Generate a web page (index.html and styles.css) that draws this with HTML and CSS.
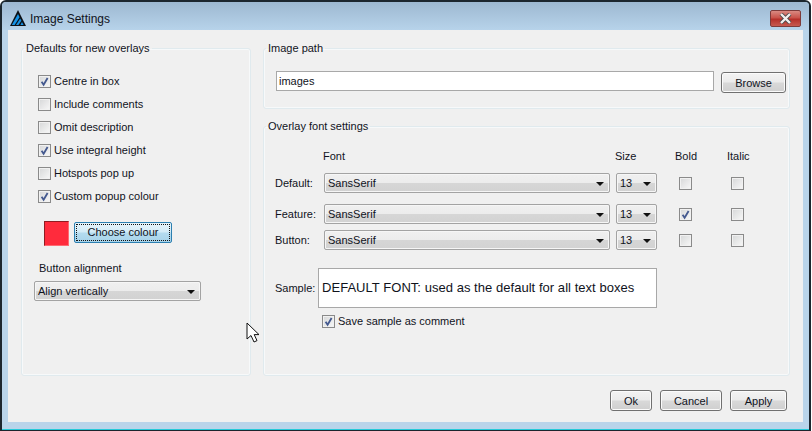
FILE: index.html
```html
<!DOCTYPE html>
<html lang="en">

<head>
    <meta charset="UTF-8">
    <meta name="viewport" content="width=device-width, initial-scale=1.0">
    <title>Image Settings</title>
    <link rel="stylesheet" href="styles.css">
</head>

<body>
    <svg class="defs" width="0" height="0">
        <symbol id="tick" viewBox="0 0 13 13">
            <path d="M3.6 6.8 L5.6 9.8 L9.6 3" fill="none" stroke="#44598f" stroke-width="1.8"/>
        </symbol>
    </svg>

    <div class="window">
        <div class="titlebar">
            <svg class="app-icon" width="18" height="18" viewBox="0 0 18 18">
                <path d="M9 1 L17 17 H1 Z" fill="#0b0f14"/>
                <path d="M9 5 L10.6 8.2 L5.6 16 H2.8 Z" fill="#1592e6"/>
                <path d="M11.2 9.4 L12.4 11.8 L9.4 16 H7 Z" fill="#1592e6"/>
                <path d="M13 13 L14.6 16 H11.4 Z" fill="#1592e6"/>
            </svg>
            <span class="title">Image Settings</span>
            <div class="close">
                <svg width="15" height="11" viewBox="0 0 15 11">
                    <path d="M3 1 L12 10 M12 1 L3 10" stroke="#4a4a4a" stroke-width="4"/>
                    <path d="M3 1 L12 10 M12 1 L3 10" stroke="#f3eeee" stroke-width="2.4"/>
                </svg>
            </div>
        </div>

        <div class="panel">
            <div class="groups">
                <fieldset class="group defaults">
                    <legend>Defaults for new overlays</legend>
                    <label class="check-row"><span class="check"><svg><use href="#tick"/></svg></span>Centre in box</label>
                    <label class="check-row"><span class="check"></span>Include comments</label>
                    <label class="check-row"><span class="check"></span>Omit description</label>
                    <label class="check-row"><span class="check"><svg><use href="#tick"/></svg></span>Use integral height</label>
                    <label class="check-row"><span class="check"></span>Hotspots pop up</label>
                    <label class="check-row"><span class="check"><svg><use href="#tick"/></svg></span>Custom popup colour</label>
                    <div class="colour-row">
                        <div class="swatch"></div>
                        <button class="btn focused" type="button"><span>Choose colour</span></button>
                    </div>
                    <div class="align-label">Button alignment</div>
                    <div class="combo align-combo">Align vertically<i class="arrow"></i></div>
                </fieldset>

                <div class="right-col">
                    <fieldset class="group path">
                        <legend>Image path</legend>
                        <div class="path-row">
                            <div class="textbox">images</div>
                            <button class="btn browse" type="button">Browse</button>
                        </div>
                    </fieldset>

                    <fieldset class="group fonts">
                        <legend>Overlay font settings</legend>
                        <div class="font-head">
                            <span class="h-font">Font</span>
                            <span class="h-size">Size</span>
                            <span class="h-bold">Bold</span>
                            <span class="h-italic">Italic</span>
                        </div>
                        <div class="font-row row-default">
                            <span>Default:</span>
                            <div class="combo">SansSerif<i class="arrow"></i></div>
                            <div class="combo size-combo">13<i class="arrow"></i></div>
                            <span class="check"></span>
                            <span class="check"></span>
                        </div>
                        <div class="font-row row-feature">
                            <span>Feature:</span>
                            <div class="combo">SansSerif<i class="arrow"></i></div>
                            <div class="combo size-combo">13<i class="arrow"></i></div>
                            <span class="check"><svg><use href="#tick"/></svg></span>
                            <span class="check"></span>
                        </div>
                        <div class="font-row row-button">
                            <span>Button:</span>
                            <div class="combo">SansSerif<i class="arrow"></i></div>
                            <div class="combo size-combo">13<i class="arrow"></i></div>
                            <span class="check"></span>
                            <span class="check"></span>
                        </div>
                        <div class="sample-row">
                            <span class="sample-name">Sample:</span>
                            <div class="sample-box">DEFAULT FONT: used as the default for all text boxes</div>
                        </div>
                        <label class="check-row save-row"><span class="check"><svg><use href="#tick"/></svg></span>Save sample as comment</label>
                    </fieldset>
                </div>
            </div>

            <div class="actions">
                <button class="btn ok" type="button">Ok</button>
                <button class="btn cancel" type="button">Cancel</button>
                <button class="btn apply" type="button">Apply</button>
            </div>
        </div>

        <!-- mouse pointer from the capture -->
        <svg class="pointer" width="16" height="22" viewBox="0 0 16 22">
            <path d="M1 1 V17 L5 13.5 L8 20 L11 18.6 L8.2 12.6 H13 Z" fill="#fff" stroke="#111" stroke-width="1"/>
        </svg>
    </div>
</body>

</html>
```

FILE: styles.css
```css
* {
    box-sizing: border-box;
}

html,
body {
    margin: 0;
    background-color: #fff;
}

body {
    font-family: "Liberation Sans", Arial, sans-serif;
    font-size: 11px;
    color: #10131c;
    width: 812px;
    height: 431px;
    overflow: hidden;
}

.defs {
    position: absolute;
}

.window {
    position: relative;
    width: 811px;
    height: 431px;
    padding: 0 6px 8px;
    background-color: #b9d4ea;
    border: 2px solid #1c262e;
    border-bottom-width: 1px;
    border-radius: 6px 6px 0 0;
    box-shadow: inset 0 -1px 0 #25c9d8;
    display: flex;
    flex-direction: column;
}

.titlebar {
    height: 28px;
    margin: 0 -6px;
    padding: 6px 8px 0 7px;
    display: flex;
    align-items: flex-start;
    background: linear-gradient(#9db8d1, #b7d3ea);
    border-radius: 4px 4px 0 0;
}

.app-icon {
    margin-top: 1px;
}

.title {
    margin: 3px 0 0 3px;
    font-size: 12px;
    line-height: 16px;
}

.close {
    margin: 2px 0 0 auto;
    width: 31px;
    height: 17px;
    display: flex;
    align-items: center;
    justify-content: center;
    background: linear-gradient(#d98a82 0, #c9534a 45%, #b5302a 55%, #c65a50 100%);
    border: 1px solid #7d3b3a;
    border-radius: 2px;
}

.panel {
    flex: 1;
    padding: 10px 12px 11px 13px;
    background-color: #f0f0f0;
    display: flex;
    flex-direction: column;
}

.groups {
    display: flex;
    gap: 12px;
    height: 336px;
}

.group {
    margin: 0;
    padding: 0;
    min-width: 0;
    border: 1px solid #e0eaee;
    border-radius: 3px;
    box-shadow: 0 0 0 1px #f7f9fa inset;
}

.group legend {
    padding: 0 2px;
    line-height: 16px;
}

.defaults {
    width: 230px;
    padding: 19px 0 0 16px;
}

.defaults legend {
    margin-left: -14px;
}

.right-col {
    width: 527px;
    display: flex;
    flex-direction: column;
    gap: 9px;
}

.path {
    height: 69px;
    padding: 15px 2px 0 12px;
}

.path legend {
    margin-left: -10px;
}

.fonts {
    flex: 1;
    padding: 7px 0 0 11px;
}

.fonts legend {
    margin-left: -9px;
}

.check-row {
    display: flex;
    align-items: center;
    gap: 3px;
    height: 13px;
    margin-bottom: 10px;
    line-height: 13px;
    white-space: nowrap;
}

.check {
    display: block;
    flex: none;
    width: 13px;
    height: 13px;
    border: 1px solid #8a8a8a;
    background: linear-gradient(135deg, #d6d7d8, #f8f8f8);
    box-shadow: inset 0 0 0 1px #f1f1f1;
    position: relative;
}

.check svg {
    position: absolute;
    left: -1px;
    top: -1px;
    width: 13px;
    height: 13px;
}

.colour-row {
    display: flex;
    align-items: flex-start;
    gap: 5px;
    margin: 19px 0 0 6px;
}

.swatch {
    width: 25px;
    height: 25px;
    margin-top: -1px;
    background-color: #ff2b3c;
    border: 1px solid;
    border-color: #8f1c22 #ff6a72 #ff6a72 #8f1c22;
}

.btn {
    display: block;
    padding: 0;
    font: inherit;
    color: inherit;
    height: 21px;
    background: linear-gradient(#f3f3f3 0, #ebebeb 48%, #d9d9d9 52%, #cfcfcf 100%);
    border: 1px solid #707070;
    border-radius: 3px;
    box-shadow: inset 0 0 0 1px #fbfbfb;
}

.btn.focused {
    width: 98px;
    padding: 1px;
    background: linear-gradient(#e6f4fb 0, #d3ebf7 48%, #b4dbef 52%, #a7d3ea 100%);
    border-color: #2c7fb0;
    border-radius: 2px;
    box-shadow: none;
}

.btn.focused span {
    display: block;
    height: 17px;
    line-height: 15px;
    border: 1px dotted #111;
}

.align-label {
    margin: 15px 0 0 1px;
    line-height: 15px;
}

.combo {
    position: relative;
    height: 20px;
    padding-left: 3px;
    line-height: 18px;
    background: linear-gradient(#f0f0f0 0, #ececec 48%, #d6d6d6 52%, #d2d2d2 100%);
    border: 1px solid #a3a3a3;
    border-radius: 2px;
    box-shadow: inset 0 0 0 1px #f6f6f6;
}

.align-combo {
    width: 167px;
    margin: 5px 0 0 -4px;
}

.arrow {
    position: absolute;
    right: 5px;
    top: 8px;
    border-style: solid;
    border-width: 4px 4px 0;
    border-color: #111 transparent transparent;
}

.path-row {
    display: flex;
    gap: 7px;
}

.textbox {
    width: 438px;
    height: 20px;
    padding-left: 2px;
    line-height: 18px;
    background-color: #fff;
    border: 1px solid #a8a8a8;
}

.browse {
    width: 65px;
    margin-top: 1px;
}

.font-head {
    position: relative;
    height: 16px;
    margin-top: 7px;
    line-height: 16px;
}

.font-head span {
    position: absolute;
    top: 0;
}

.h-font {
    left: 48px;
}

.h-size {
    left: 340px;
}

.h-bold {
    left: 400px;
}

.h-italic {
    left: 452px;
}

.font-row {
    display: grid;
    grid-template-columns: 49px 286px 47px 52px auto;
    align-items: center;
    height: 20px;
}

.font-row .check {
    margin-left: 22px;
}

.size-combo {
    margin-left: 6px;
    width: 41px;
}

.row-default {
    margin-top: 9px;
}

.row-feature {
    margin-top: 11px;
}

.row-button {
    margin-top: 6px;
}

.sample-row {
    display: flex;
    align-items: center;
    margin-top: 18px;
}

.sample-name {
    width: 43px;
}

.sample-box {
    width: 339px;
    height: 40px;
    padding-left: 3px;
    font-size: 13px;
    letter-spacing: 0.04px;
    line-height: 38px;
    white-space: nowrap;
    background-color: #fff;
    border: 1px solid #a8a8a8;
}

.save-row {
    margin: 7px 0 0 47px;
}

.actions {
    display: flex;
    justify-content: flex-end;
    gap: 8px;
    margin-top: 14px;
    padding-right: 4px;
}

.ok {
    width: 42px;
}

.cancel {
    width: 62px;
}

.apply {
    width: 57px;
}

.pointer {
    position: absolute;
    left: 244px;
    top: 320px;
}
```
